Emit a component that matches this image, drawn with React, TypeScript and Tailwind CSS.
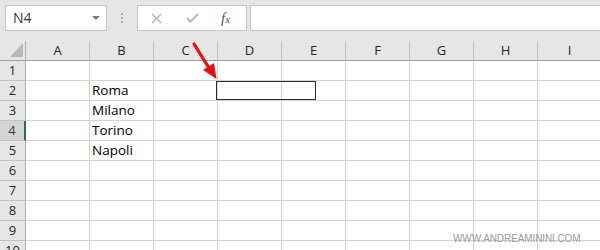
import React from "react";

const cols = ["A", "B", "C", "D", "E", "F", "G", "H", "I"];
const rows = [1, 2, 3, 4, 5, 6, 7, 8, 9, 10];
const data: Record<string, string> = {
  "B2": "Roma",
  "B3": "Milano",
  "B4": "Torino",
  "B5": "Napoli",
};

export default function App() {
  return (
    <div className="relative w-[600px] h-[250px] overflow-hidden bg-[#e6e6e6]" style={{ fontFamily: '"Open Sans", "Liberation Sans", sans-serif' }}>
      {/* Toolbar */}
      <div className="flex h-[41px] pt-[5px] pl-[5px] items-start">
        <div className="w-[102px] h-[26px] border border-[#c6c6c6] bg-white flex items-center justify-between pl-[7px] pr-[6px]">
          <span className="text-[14px] text-[#3a3a3a] leading-none">N4</span>
          <svg width="8" height="4" viewBox="0 0 8 4"><polygon points="0,0 8,0 4,4" fill="#7a7a7a" /></svg>
        </div>
        <div className="ml-[14px] mt-[8px] flex flex-col gap-[2px]">
          <div className="w-[2px] h-[2px] bg-[#a9a9a9]" />
          <div className="w-[2px] h-[2px] bg-[#a9a9a9]" />
          <div className="w-[2px] h-[2px] bg-[#a9a9a9]" />
        </div>
        <div className="ml-[14px] w-[110px] h-[26px] border border-[#c6c6c6] bg-white flex items-center">
          <svg className="ml-[13px]" width="11" height="11" viewBox="0 0 11 11">
            <path d="M1 1 L10 10 M10 1 L1 10" stroke="#b3b3b3" strokeWidth="1.3" fill="none" />
          </svg>
          <svg className="ml-[24px]" width="13" height="10" viewBox="0 0 13 10">
            <path d="M1 5 L4.5 8.5 L12 1" stroke="#b9b9b9" strokeWidth="2" fill="none" />
          </svg>
          <span className="ml-[22px] text-[15px] italic text-[#555] leading-none" style={{ fontFamily: '"Liberation Serif", serif' }}>
            f<span className="text-[11px]">x</span>
          </span>
        </div>
        <div className="ml-[3px] flex-1 h-[26px] border-y border-l border-[#c6c6c6] bg-white" />
      </div>

      {/* Column headers */}
      <div className="flex h-[20px] border-b border-[#a0a0a0]">
        <div className="w-[26px] shrink-0 border-r border-[#b0b0b0] relative">
          <svg className="absolute left-[10px] top-[2px]" width="13" height="14" viewBox="0 0 13 14">
            <polygon points="13,0 13,14 0,14" fill="#b8b8b8" />
          </svg>
        </div>
        {cols.map((c) => (
          <div key={c} className="w-[64px] shrink-0 border-r border-[#c2c2c2] flex items-center justify-center text-[13px] text-[#262626]">
            {c}
          </div>
        ))}
      </div>

      {/* Rows */}
      {rows.map((r) => (
        <div key={r} className="flex h-[20px]">
          <div
            className={
              r === 4
                ? "w-[26px] shrink-0 h-[20px] border-b border-[#c2c2c2] border-r-2 border-r-[#217346] bg-[#d4d4d4] flex items-center justify-center text-[13px] text-[#3a3a3a]"
                : "w-[26px] shrink-0 h-[20px] border-b border-[#c2c2c2] border-r border-r-[#b0b0b0] bg-[#e6e6e6] flex items-center justify-center text-[13px] text-[#262626]"
            }
          >
            {r}
          </div>
          {cols.map((c) => (
            <div key={c} className="w-[64px] shrink-0 h-[20px] bg-white border-r border-b border-[#d4d4d4] flex items-center pl-[2px] pt-[1px] text-[13.5px] text-black leading-none">
              {data[c + r] ?? ""}
            </div>
          ))}
        </div>
      ))}

      {/* Annotation rectangle */}
      <div className="absolute left-[216px] top-[81px] w-[100px] h-[19px] border border-[#2b2b2b]" />

      {/* Red arrow */}
      <svg className="absolute left-0 top-0" width="600" height="250" viewBox="0 0 600 250">
        <line x1="194" y1="44" x2="209" y2="68" stroke="#f20d0d" strokeWidth="3.2" strokeLinecap="round" />
        <polygon points="216.5,79 203,70 214,63" fill="#f20d0d" />
      </svg>

      {/* Watermark */}
      <div className="absolute left-[453px] top-[234px] text-[10px] text-[#9c9c9c] leading-none tracking-[-0.1px]" style={{ fontFamily: '"Liberation Sans", Arial, sans-serif' }}>
        WWW.ANDREAMININI.COM
      </div>
    </div>
  );
}
